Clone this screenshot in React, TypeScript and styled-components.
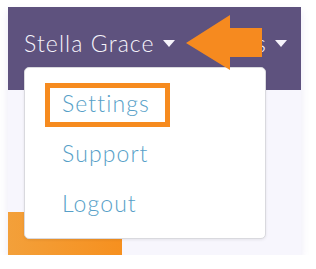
import React from 'react';
import styled, { createGlobalStyle } from 'styled-components';

const GlobalStyle = createGlobalStyle`
    body {
        margin: 0;
        background: #ffffff;
        font-family: 'Lato', 'Liberation Sans', sans-serif;
    }
`;

const Page = styled.div`
    padding: 7px 0 0 8px;
`;

const Card = styled.div`
    position: relative;
    width: 293px;
    height: 248px;
    display: flex;
    flex-direction: column;
    background: #f7f6fd;
    box-shadow: 0 4px 8px rgba(110, 100, 190, 0.14);
`;

const Header = styled.div`
    height: 83px;
    box-sizing: border-box;
    display: flex;
    align-items: flex-start;
    justify-content: space-between;
    padding: 22px 14px 0 16px;
    background: #5e527e;
`;

const NavItem = styled.div`
    display: flex;
    align-items: center;
    gap: 8px;
    color: #f6f4fb;
    font-size: 23px;
    font-weight: 300;
    letter-spacing: 1.1px;
    line-height: 28px;
`;

const Body = styled.div`
    flex: 1;
    display: flex;
    align-items: flex-end;
`;

const OrangeBlock = styled.div`
    width: 114px;
    height: 43px;
    background: linear-gradient(90deg, #f3a03a, #f6901f);
`;

const Dropdown = styled.div`
    position: absolute;
    left: 16px;
    top: 60px;
    width: 242px;
    box-sizing: border-box;
    padding: 10px 0;
    background: #ffffff;
    border: 1px solid #d9d9de;
    border-radius: 5px;
    box-shadow: 0 1px 3px rgba(0, 0, 0, 0.08);
`;

const MenuItem = styled.div<{ $highlighted?: boolean }>`
    position: relative;
    padding-left: 37px;
    height: 50px;
    line-height: 50px;
    font-size: 23px;
    font-weight: 300;
    letter-spacing: 1.1px;
    color: #579fc8;

    &::after {
        content: '';
        display: ${p => (p.$highlighted ? 'block' : 'none')};
        position: absolute;
        left: 20px;
        top: 5px;
        width: 125px;
        height: 44px;
        box-sizing: border-box;
        border: 5px solid #f68b1f;
    }
`;

const Pointer = styled.svg`
    position: absolute;
    left: 176px;
    top: 6px;
`;

const Caret = () => (
    <svg width="12" height="7" viewBox="0 0 12 7">
        <polygon points="0,0 12,0 6,7" fill="#f6f4fb" />
    </svg>
);

export default function App() {
    return (
        <Page>
            <GlobalStyle />
            <Card>
                <Header>
                    <NavItem>
                        Stella Grace <Caret />
                    </NavItem>
                    <NavItem>
                        Tools <Caret />
                    </NavItem>
                </Header>
                <Body>
                    <OrangeBlock />
                </Body>
                <Dropdown>
                    <MenuItem $highlighted>Settings</MenuItem>
                    <MenuItem>Support</MenuItem>
                    <MenuItem>Logout</MenuItem>
                </Dropdown>
                <Pointer width="80" height="60" viewBox="0 0 80 60">
                    <polygon
                        points="2,30 46,2 46,15 78,15 78,44 46,44 46,57"
                        fill="#f68a1f"
                    />
                </Pointer>
            </Card>
        </Page>
    );
}
